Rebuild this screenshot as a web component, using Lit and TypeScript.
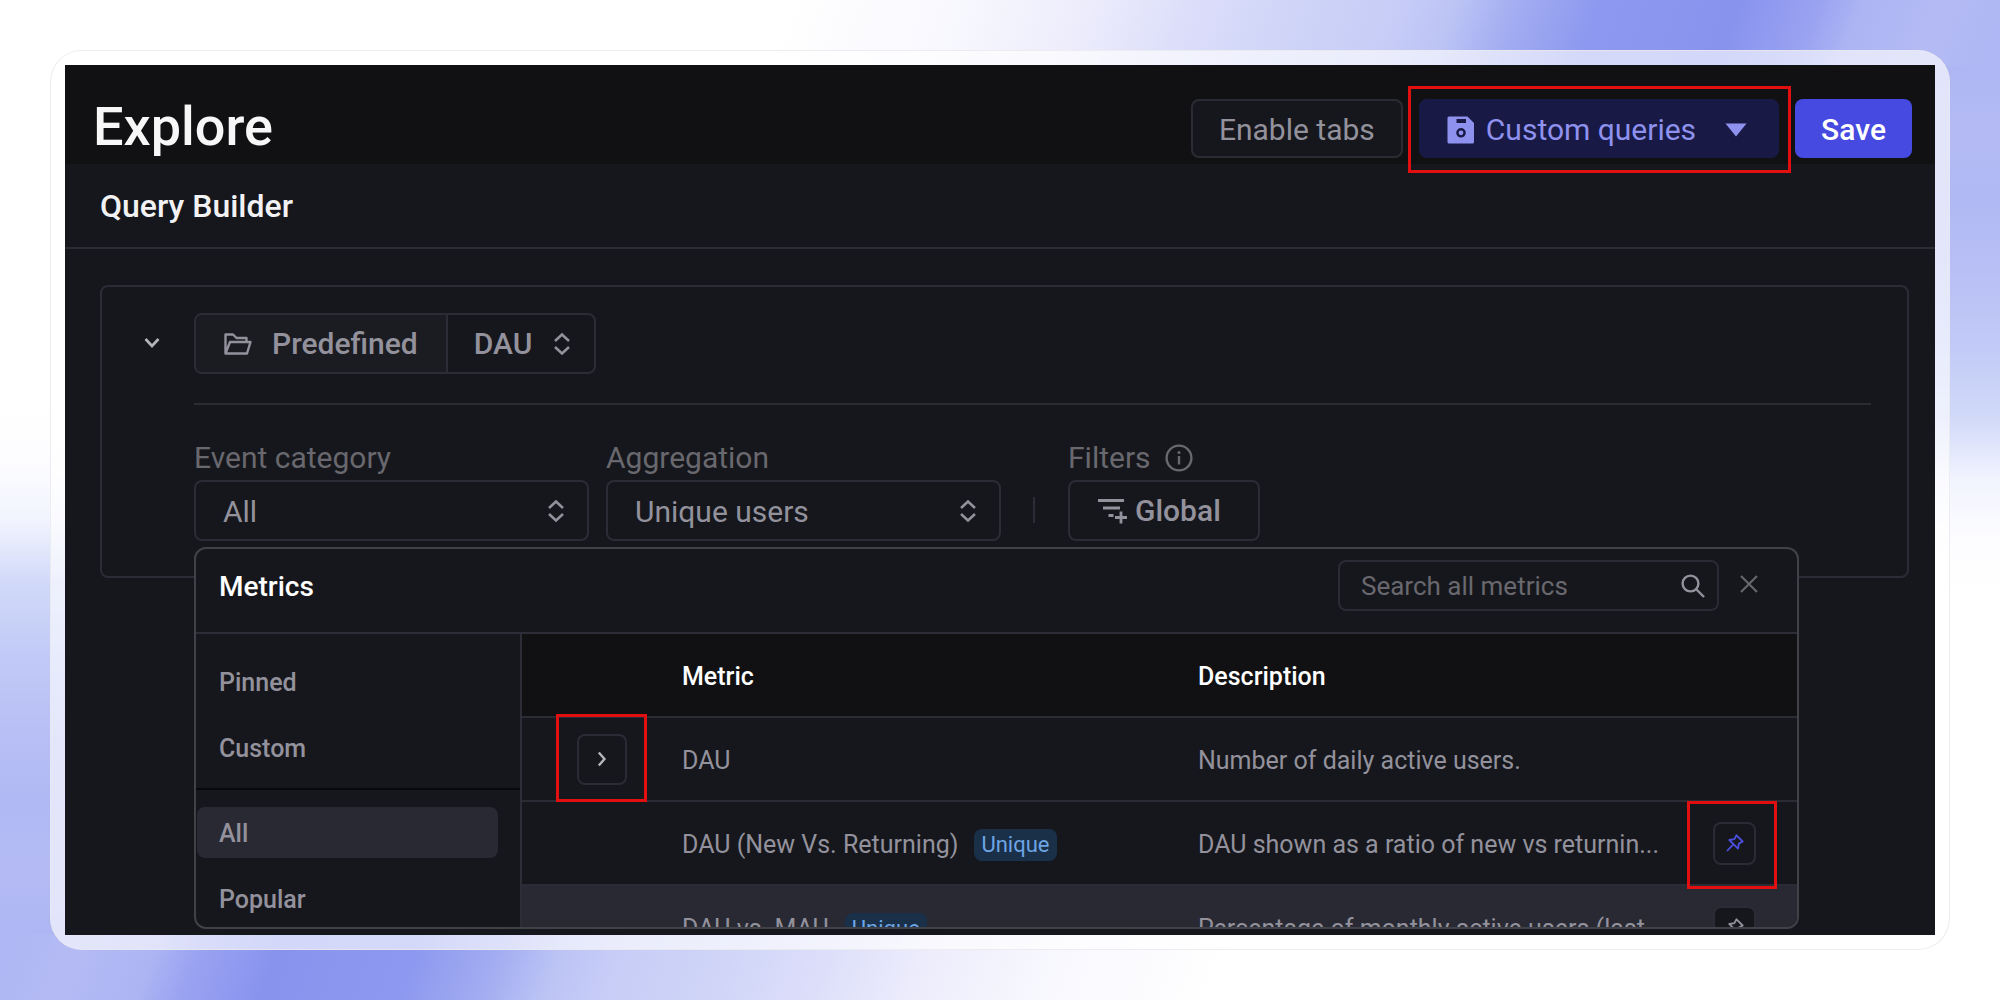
import { LitElement, html, css, svg, nothing } from "lit";
import { customElement, property } from "lit/decorators.js";

type IconName = "down" | "right" | "sort" | "folder" | "floppy" | "caret" | "info" | "filter" | "search" | "close" | "pin";

const line = (width: number, body: unknown) =>
  svg`<g fill="none" stroke="currentColor" stroke-width=${width}>${body}</g>`;

const icons: Record<IconName, [number, number, unknown]> = {
  down: [16, 12, line(2.6, svg`<path d="M1.500 2 8 9 14.500 2"/>`)],
  right: [10, 16, line(2.4, svg`<path d="M1.800 1.500 7.500 8 1.800 14.500"/>`)],
  sort: [16, 22, line(2.5, svg`<path d="M1 8 8 1.500 15 8M1 14 8 20.500 15 14"/>`)],
  folder: [28, 22, line(2.4, svg`<path d="M1.500 20.500V1.500H9l3.500 3.500H22.500V9M1.500 20.500 6 9H26.500L23 20.500Z" stroke-linejoin="round"/>`)],
  floppy: [28, 28, svg`<path fill="currentColor" fill-rule="evenodd" d="M2 .5H20.500L27 7V26a1.500 1.500 0 0 1-1.500 1.500H2A1.500 1.500 0 0 1 .5 26V2A1.500 1.500 0 0 1 2 .5ZM9.500 3V7H19V3ZM14 12a4.800 4.800 0 1 0 0 9.600 4.800 4.800 0 0 0 0-9.600ZM14 14.400a2.400 2.400 0 1 1 0 4.800 2.400 2.400 0 0 1 0-4.800Z"/>`],
  caret: [22, 14, svg`<path fill="currentColor" d="M.5.5H21.500L11 13.500Z"/>`],
  info: [28, 28, svg`${line(2.4, svg`<circle cx="14" cy="14" r="12.400"/><path d="M14 12V20.500"/>`)}<circle cx="14" cy="8.600" r="1.500" fill="currentColor"/>`],
  filter: [30, 26, svg`<path fill="currentColor" d="M1 1H27V4H1ZM6 8.500H23V11.500H6ZM11.500 16H16.500V19H11.500ZM22.600 13.500H25.400V18.100H30V20.900H25.400V25.500H22.600V20.900H18V18.100H22.600Z"/>`],
  search: [24, 24, line(2.4, svg`<circle cx="9.500" cy="9.500" r="7.900"/><path d="M15 15 23 23"/>`)],
  close: [18, 18, line(2, svg`<path d="M1 1 17 17M17 1 1 17"/>`)],
  pin: [18, 18, line(1.800, svg`<path d="M10.500 1.300 16.700 7.500 12.900 9.600 12 14.700 3.300 6 8.400 5.100ZM7.300 10.300 1 17" stroke-linejoin="round"/>`)],
};

const icon = (name: IconName) => {
  const [w, h, body] = icons[name];
  return html`<svg class="icon" width=${w} height=${h} viewBox="0 0 ${w} ${h}" aria-hidden="true">${body}</svg>`;
};

const shared = css`
  *, *::before, *::after { box-sizing: border-box; }
  button, input, select { margin: 0; font: inherit; color: inherit; background: none; border: 0; }
  button, select { cursor: pointer; }
  button { display: inline-flex; align-items: center; padding: 0; white-space: nowrap; }
  .icon { display: block; flex: none; overflow: visible; }
  .marked { position: relative; display: inline-flex; }
  .marked::after {
    content: "";
    position: absolute;
    z-index: 2;
    border: 3px solid #e10f10;
    pointer-events: none;
  }
`;

interface Metric {
  name: string;
  description: string;
  unique?: boolean;
  expandable?: boolean;
  pin?: "active" | "idle";
  hovered?: boolean;
}

const metrics: Metric[] = [
  { name: "DAU", description: "Number of daily active users.", expandable: true },
  { name: "DAU (New Vs. Returning)", description: "DAU shown as a ratio of new vs returnin...", unique: true, pin: "active" },
  { name: "DAU vs. MAU", description: "Percentage of monthly active users (last...", unique: true, pin: "idle", hovered: true },
];

@customElement("metrics-picker")
class MetricsPicker extends LitElement {
  @property({ attribute: false }) items: Metric[] = [];

  static styles = [shared, css`
    :host {
      display: flex;
      flex-direction: column;
      overflow: hidden;
      border: 2px solid #414247;
      border-radius: 12px;
      background: #16171c;
      color: #93929c;
      font-size: 25px;
    }
    .head {
      flex: none;
      display: flex;
      align-items: flex-start;
      height: 85px;
      padding: 11px 39px 0 23px;
      border-bottom: 2px solid #2c2d37;
    }
    .title { margin: 0 auto 0 0; font-size: 28px; line-height: 54px; font-weight: 500; color: #fff; }
    .search {
      display: flex;
      align-items: center;
      width: 381px;
      height: 51px;
      margin-right: 21px;
      padding: 0 12px 0 21px;
      border: 2px solid #2a2b35;
      border-radius: 8px;
      font-size: 26px;
    }
    .query { flex: 1; min-width: 0; padding: 2px 0 0; outline: 0; }
    .query::placeholder { color: #68686e; opacity: 1; }
    .close { height: 48px; color: #68686e; }
    .body { flex: 1; min-height: 0; display: flex; }
    .groups {
      flex: none;
      width: 326px;
      display: flex;
      flex-direction: column;
      gap: 15px;
      padding: 22px 22px 0 1px;
      border-right: 2px solid #2c2d37;
      font-weight: 500;
    }
    .group { flex: none; height: 51px; padding: 2px 0 0 22px; border-radius: 8px; }
    .current { background: #282933; }
    .split { flex: none; height: 2px; margin: 0 -22px 2px -1px; border: 0; background: #08080a; }
    .list { flex: 1; min-width: 0; }
    .table { width: 100%; table-layout: fixed; border-collapse: separate; border-spacing: 0; }
    .cell { height: 84px; padding: 0; border-bottom: 2px solid #2a2b35; text-align: left; font-weight: 400; }
    .heading { padding-top: 3px; background: #111113; color: #fff; font-weight: 500; }
    .col-expand { width: 160px; }
    .col-metric { width: 516px; }
    .col-pin { width: 111px; }
    .expand { padding-left: 55px; }
    .metric, .description { padding-top: 3px; white-space: nowrap; }
    .pin { padding-right: 41px; text-align: right; }
    .hovered { background: #282933; }
    .name { display: flex; align-items: center; gap: 16px; }
    .badge { padding: 0 7px; border-radius: 8px; background: #1a3049; color: #6ea5e4; font-size: 22px; line-height: 32px; }
    .square { justify-content: center; width: 43px; height: 43px; border: 2px solid #2a2b35; border-radius: 8px; background: #16171c; vertical-align: middle; }
    .large { width: 50px; height: 51px; color: #b4b4ba; }
    .active { color: #4a4fe0; }
    .mark-expand::after { inset: -20px -20px -17px -21px; }
    .mark-pin::after { inset: -21px -21px -24px -26px; }
    .marked { vertical-align: middle; }
  `];

  private row(m: Metric) {
    const pin = html`<button class="square ${m.pin === "active" ? "active" : ""}" aria-label="Pin ${m.name}">${icon("pin")}</button>`;
    return html`
      <tr class=${m.hovered ? "hovered" : ""}>
        <td class="cell expand">
          ${m.expandable ? html`<span class="marked mark-expand"><button class="square large" aria-label="Expand ${m.name}">${icon("right")}</button></span>` : nothing}
        </td>
        <td class="cell metric"><span class="name">${m.name}${m.unique ? html`<span class="badge">Unique</span>` : nothing}</span></td>
        <td class="cell description">${m.description}</td>
        <td class="cell pin">
          ${m.pin === "active" ? html`<span class="marked mark-pin">${pin}</span>` : m.pin ? pin : nothing}
        </td>
      </tr>`;
  }

  render() {
    return html`
      <header class="head">
        <h2 class="title">Metrics</h2>
        <label class="search"><input class="query" type="text" placeholder="Search all metrics" aria-label="Search all metrics">${icon("search")}</label>
        <button class="close" aria-label="Close">${icon("close")}</button>
      </header>
      <div class="body">
        <nav class="groups">
          <button class="group">Pinned</button>
          <button class="group">Custom</button>
          <hr class="split">
          <button class="group current">All</button>
          <button class="group">Popular</button>
        </nav>
        <div class="list">
          <table class="table">
            <thead>
              <tr>
                <th class="cell heading col-expand"></th>
                <th class="cell heading col-metric">Metric</th>
                <th class="cell heading">Description</th>
                <th class="cell heading col-pin"></th>
              </tr>
            </thead>
            <tbody>${this.items.map((m) => this.row(m))}</tbody>
          </table>
        </div>
      </div>`;
  }
}

@customElement("app-root")
class AppRoot extends LitElement {
  static styles = [shared, css`
    :host {
      display: block;
      font-family: Roboto, "Liberation Sans", sans-serif;
      font-size: 30px;
      line-height: 1.2;
      color: #93929c;
    }
    .page {
      --sweep: #fff 39%, #f7f7fe 48%, #ececfc 54%, #dcdefa 59%, #cdd3f7 65%, #c8cdf7 69%, #bcc4f5 72%, #a3adf1 75%, #8d99ef 79%, #8893ee 86%, #9aa3f1 90%, #acb4f3 92%, #b4bbf4 96%, #aeb6f3;
      --fall: #aeb6f3 6%, #b4bbf4 13%, #b1b9f4 20%, #b8bff5 27%, #c2cbf7 35%, #d2daf8 42%, #e2e7fb 45%, #f2f4fe 48%, #fdfdff 54%, #fff 60%;
      display: flex;
      height: 100vh;
      min-height: 600px;
      padding: 50px;
      background:
        linear-gradient(110deg, var(--sweep)) top / 100% 66px no-repeat,
        linear-gradient(290deg, var(--sweep)) bottom / 100% 66px no-repeat,
        linear-gradient(to bottom, var(--fall)) right / 66px 100% no-repeat,
        linear-gradient(to top, var(--fall)) left / 66px 100% no-repeat,
        #fff;
    }
    .frame {
      flex: 1;
      min-width: 0;
      display: flex;
      padding: 14px;
      border: 1px solid rgb(232 232 238 / 80%);
      border-radius: 32px;
      background: rgb(255 255 255 / 63%);
    }
    .window { flex: 1; min-width: 0; display: flex; flex-direction: column; overflow: hidden; background: #16171c; }
    .top {
      flex: none;
      display: flex;
      align-items: flex-start;
      gap: 16px;
      height: 99px;
      padding: 32px 23px 0 28px;
      background: #111113;
    }
    .title { margin: 0 auto 0 0; font-size: 54px; line-height: 60px; font-weight: 500; color: #f7f7f8; }
    .top-button { height: 59px; margin-top: 2px; padding: 2px 26px 0; border-radius: 8px; }
    .plain { border: 2px solid #2b2c33; background: #16171c; }
    .saved { gap: 11px; padding: 2px 32px 0 28px; background: #181a45; color: #8f91ef; }
    .saved .icon:last-child { margin-left: 18px; }
    .save { background: #464ae0; color: #fff; font-weight: 500; }
    .mark-saved::after { inset: -11px -12px -15px -11px; }
    .bar {
      flex: none;
      height: 85px;
      margin: 0;
      padding: 0 35px;
      border-bottom: 2px solid #2b2c35;
      line-height: 84px;
      font-size: 32px;
      font-weight: 500;
      color: #f2f2f4;
    }
    .main { position: relative; flex: 1; padding: 36px 26px 0 35px; }
    .card { display: flex; height: 293px; padding: 26px 36px 0 42px; border: 2px solid #2b2c35; border-radius: 8px; }
    .toggle { flex: none; align-items: center; height: 59px; margin-right: 34px; color: #b4b4ba; }
    .builder { flex: 1; min-width: 0; }
    .picked { display: inline-flex; height: 61px; border: 2px solid #2b2c35; border-radius: 8px; overflow: hidden; font-weight: 500; }
    .source { gap: 20px; padding: 0 28px; background: #1b1c22; border-right: 2px solid #2b2c35; }
    .metric { gap: 22px; padding: 0 24px 0 26px; }
    .rule { height: 2px; margin: 29px 0 35px; border: 0; background: #2b2c31; }
    .fields { display: flex; align-items: flex-end; }
    .field { display: flex; flex-direction: column; gap: 4px; color: #68686e; }
    .label { display: flex; align-items: center; gap: 14px; height: 36px; }
    .wide { width: 395px; margin-right: 17px; }
    .picker { position: relative; display: flex; align-items: center; color: #93929c; }
    .picker .icon { position: absolute; right: 25px; pointer-events: none; }
    .select {
      appearance: none;
      width: 100%;
      height: 61px;
      padding: 2px 56px 0 27px;
      border: 2px solid #2b2c35;
      border-radius: 8px;
      outline: 0;
    }
    .divider { width: 2px; height: 26px; margin: 0 33px 18px 15px; background: #2b2c35; }
    .global { gap: 8px; height: 61px; padding: 0 37px 0 27px; border: 2px solid #2b2c35; border-radius: 8px; color: #93929c; font-weight: 500; }
    .popup { position: absolute; inset: 298px 136px 6px 129px; }
  `];

  render() {
    return html`
      <div class="page">
        <div class="frame">
          <div class="window">
            <header class="top">
              <h1 class="title">Explore</h1>
              <button class="top-button plain">Enable tabs</button>
              <span class="marked mark-saved">
                <button class="top-button saved">${icon("floppy")}<span>Custom queries</span>${icon("caret")}</button>
              </span>
              <button class="top-button save">Save</button>
            </header>
            <h2 class="bar">Query Builder</h2>
            <main class="main">
              <section class="card">
                <button class="toggle" aria-label="Collapse">${icon("down")}</button>
                <div class="builder">
                  <div class="picked">
                    <button class="source">${icon("folder")}Predefined</button>
                    <button class="metric">DAU${icon("sort")}</button>
                  </div>
                  <hr class="rule">
                  <div class="fields">
                    <div class="field wide">
                      <label class="label" for="category">Event category</label>
                      <div class="picker"><select class="select" id="category"><option>All</option></select>${icon("sort")}</div>
                    </div>
                    <div class="field wide">
                      <label class="label" for="aggregation">Aggregation</label>
                      <div class="picker"><select class="select" id="aggregation"><option>Unique users</option></select>${icon("sort")}</div>
                    </div>
                    <div class="divider"></div>
                    <div class="field">
                      <span class="label">Filters ${icon("info")}</span>
                      <button class="global">${icon("filter")}Global</button>
                    </div>
                  </div>
                </div>
              </section>
              <metrics-picker class="popup" .items=${metrics}></metrics-picker>
            </main>
          </div>
        </div>
      </div>`;
  }
}
